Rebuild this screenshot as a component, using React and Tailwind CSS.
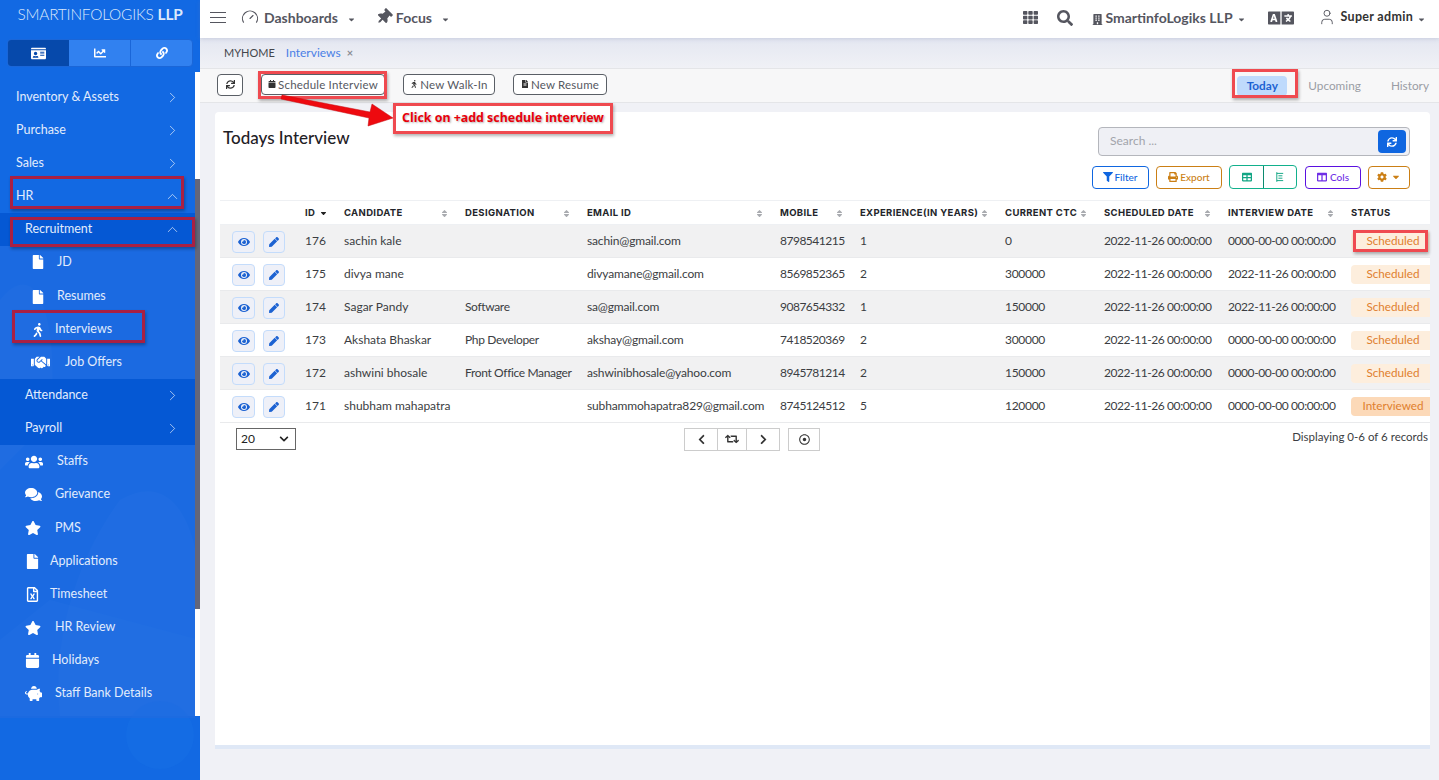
import { Gauge, ChevronRight, ChevronUp, User } from 'lucide-react';
import {
  FaIdCard, FaChartLine, FaLink, FaFile, FaWalking, FaHandshake, FaUsers, FaComments, FaStar,
  FaRegFileExcel, FaCalendar, FaPiggyBank, FaThumbtack, FaTh, FaSearch, FaBuilding, FaLanguage,
  FaSync, FaFilter, FaPrint, FaTable, FaColumns, FaCog, FaEye, FaPen, FaChevronLeft, FaChevronDown,
  FaChevronRight, FaRetweet, FaRegDotCircle, FaSort, FaSortDown, FaCaretDown, FaFileAlt,
} from 'react-icons/fa';

const navTop = [
  { label: 'Inventory & Assets', arrow: 'right' },
  { label: 'Purchase', arrow: 'right' },
  { label: 'Sales', arrow: 'right' },
  { label: 'HR', arrow: 'up' },
];

const recruitment = [
  { label: 'JD', icon: FaFile, text: 'ml-[12px]', h: 'h-[32px]' },
  { label: 'Resumes', icon: FaFile, text: 'ml-[12px]', h: 'h-[35px] pt-[2px]' },
  { label: 'Interviews', icon: FaWalking, text: 'ml-[10px]', h: 'h-[33px]' },
  { label: 'Job Offers', icon: FaHandshake, wide: true, text: 'ml-[15px]', h: 'h-[33px]' },
];

const navBottom = [
  { label: 'Staffs', icon: FaUsers, size: 'text-[18px]', text: 'w-[32px]', h: 'h-[33px]' },
  { label: 'Grievance', icon: FaComments, size: 'text-[17px]', text: 'w-[30px]', h: 'h-[33px]' },
  { label: 'PMS', icon: FaStar, size: 'text-[16px]', text: 'w-[30px]', h: 'h-[34px]' },
  { label: 'Applications', icon: FaFile, size: 'text-[15px]', text: 'w-[25px]', h: 'h-[33px]' },
  { label: 'Timesheet', icon: FaRegFileExcel, size: 'text-[15px]', text: 'w-[25px]', h: 'h-[33px]' },
  { label: 'HR Review', icon: FaStar, size: 'text-[16px]', text: 'w-[30px]', h: 'h-[33px]' },
  { label: 'Holidays', icon: FaCalendar, size: 'text-[15px]', text: 'w-[27px]', h: 'h-[33px]' },
  { label: 'Staff Bank Details', icon: FaPiggyBank, size: 'text-[17px]', text: 'w-[30px]', h: 'h-[33px]' },
];

const columns = [
  { label: 'ID', w: 'w-[39px]', sort: 'down', cell: '' },
  { label: 'CANDIDATE', w: 'w-[121px]', sort: 'both', cell: '' },
  { label: 'DESIGNATION', w: 'w-[122px]', sort: 'both', cell: 'tracking-[-0.35px]' },
  { label: 'EMAIL ID', w: 'w-[193px]', sort: 'both', cell: 'tracking-[-0.15px]' },
  { label: 'MOBILE', w: 'w-[80px]', sort: 'both', cell: 'tracking-[-0.5px]' },
  { label: 'EXPERIENCE(IN YEARS)', w: 'w-[145px]', sort: 'both', cell: '' },
  { label: 'CURRENT CTC', w: 'w-[99px]', sort: 'both', cell: 'tracking-[-0.3px]' },
  { label: 'SCHEDULED DATE', w: 'w-[124px]', sort: 'both', cell: 'tracking-[-0.42px]' },
  { label: 'INTERVIEW DATE', w: 'w-[123px]', sort: 'both', cell: 'tracking-[-0.42px]' },
  { label: 'STATUS', w: 'w-[87px]', cell: '' },
];

const rows = [
  ['176', 'sachin kale', '', 'sachin@gmail.com', '8798541215', '1', '0', '2022-11-26 00:00:00', '0000-00-00 00:00:00', 'Scheduled'],
  ['175', 'divya mane', '', 'divyamane@gmail.com', '8569852365', '2', '300000', '2022-11-26 00:00:00', '2022-11-26 00:00:00', 'Scheduled'],
  ['174', 'Sagar Pandy', 'Software', 'sa@gmail.com', '9087654332', '1', '150000', '2022-11-26 00:00:00', '2022-11-26 00:00:00', 'Scheduled'],
  ['173', 'Akshata Bhaskar', 'Php Developer', 'akshay@gmail.com', '7418520369', '2', '300000', '2022-11-26 00:00:00', '0000-00-00 00:00:00', 'Scheduled'],
  ['172', 'ashwini bhosale', 'Front Office Manager', 'ashwinibhosale@yahoo.com', '8945781214', '2', '150000', '2022-11-26 00:00:00', '0000-00-00 00:00:00', 'Scheduled'],
  ['171', 'shubham mahapatra', '', 'subhammohapatra829@gmail.com', '8745124512', '5', '120000', '2022-11-26 00:00:00', '0000-00-00 00:00:00', 'Interviewed'],
];

function Arrow({ dir }) {
  if (dir === 'up') return <ChevronUp className="w-[17px] h-[17px] text-white/70" strokeWidth={1.25} />;
  return <ChevronRight className="w-[17px] h-[17px] text-white/70" strokeWidth={1.25} />;
}

function Sidebar() {
  return (
    <aside className="relative w-[200px] h-[780px] flex-shrink-0 flex flex-col overflow-hidden bg-[#1269e3] text-[#e2ecfc] text-[12.5px]">
      <svg className="absolute inset-0 w-full h-full" viewBox="0 0 200 780" fill="none">
        <path d="M0 300 C40 250 60 330 50 420 L0 470Z" fill="#2a78e8" opacity="0.5" />
        <path d="M120 500 C170 470 200 520 200 600 L200 716 L60 716 C50 620 90 540 120 500Z" fill="#2f7dea" opacity="0.45" />
        <path d="M0 640 L50 600 L200 640 L200 716 L0 716Z" fill="#2f7dea" opacity="0.4" />
        <circle cx="160" cy="735" r="34" fill="#1570e6" opacity="0.5" />
      </svg>
      <div className="relative h-[29px] flex items-center justify-center text-[15.4px] tracking-[-0.2px] text-[#dbe8fb] font-light">
        <span>SMARTINFOLOGIKS <span className="font-bold">LLP</span></span>
      </div>
      <div className="relative mt-[10px] mx-[7px] h-[28px] flex rounded border border-[#1a66d8] bg-[#3181f0] overflow-hidden">
        <div className="w-[61px] bg-[#0649ab] flex items-center justify-center text-white text-[15px]"><FaIdCard /></div>
        <div className="w-[62px] border-r border-[#1a66d8] flex items-center justify-center text-white text-[12px]"><FaChartLine /></div>
        <div className="flex-1 flex items-center justify-center text-white text-[12px]"><FaLink /></div>
      </div>
      <div className="relative mt-[5px] h-[644px] flex">
        <div className="w-[195px] pt-[9px]">
          {navTop.map((item) => (
            <div key={item.label} className="h-[33px] pl-4 pr-[14px] flex items-center justify-between">
              <span>{item.label}</span>
              <Arrow dir={item.arrow} />
            </div>
          ))}
          <div className="h-[33px] pl-[25px] pr-[14px] flex items-center justify-between bg-[#0558d4]">
            <span>Recruitment</span>
            <Arrow dir="up" />
          </div>
          <div className="bg-[#1f6be0]/70">
            {recruitment.map((item) => {
              const Icon = item.icon;
              return (
                <div key={item.label} className={item.h + ' pl-[31px] flex items-center'}>
                  <Icon className={item.wide ? 'text-[19px] text-white' : 'text-[14px] text-white w-[14px]'} />
                  <span className={item.text}>{item.label}</span>
                </div>
              );
            })}
          </div>
          <div className="bg-[#0558d4]">
            {['Attendance', 'Payroll'].map((label) => (
              <div key={label} className="h-[33px] pl-[25px] pr-[14px] flex items-center justify-between">
                <span>{label}</span>
                <Arrow dir="right" />
              </div>
            ))}
          </div>
          <div className="bg-[#1f6be0]/70 h-[273px]">
            {navBottom.map((item) => {
              const Icon = item.icon;
              return (
                <div key={item.label} className={item.h + ' pl-[25px] flex items-center'}>
                  <div className={item.text + ' flex-shrink-0'}><Icon className={item.size + ' text-white'} /></div>
                  <span>{item.label}</span>
                </div>
              );
            })}
          </div>
        </div>
        <div className="w-[5px] bg-white flex flex-col">
          <div className="h-[107px]" />
          <div className="h-[430px] bg-[#63667a]" />
        </div>
      </div>
    </aside>
  );
}

function TopBar() {
  return (
    <header className="h-[38px] bg-white flex items-center text-[#55565f] shadow-[0_1px_4px_rgba(120,130,170,0.25)] relative">
      <div className="ml-[10px] w-[16px] flex flex-col gap-[4px] -mt-[3px]">
        <span className="h-[1px] bg-[#55565f]" />
        <span className="h-[1px] bg-[#55565f]" />
        <span className="h-[1px] bg-[#55565f]" />
      </div>
      <Gauge className="ml-[15px] w-[18px] h-[18px] -mt-1" strokeWidth={1.5} />
      <span className="ml-[5px] text-[14px] font-bold -mt-[4px]">Dashboards</span>
      <FaCaretDown className="ml-[9px] text-[9px]" />
      <FaThumbtack className="ml-[20px] text-[16px] -mt-1 rotate-45" />
      <span className="ml-[4px] text-[14px] font-bold -mt-[4px]">Focus</span>
      <FaCaretDown className="ml-[9px] text-[9px]" />
      <div className="ml-auto flex items-center">
        <FaTh className="text-[15px] -mt-1" />
        <FaSearch className="ml-[19px] text-[16px] -mt-[2px]" />
        <FaBuilding className="ml-[19px] text-[11px]" />
        <span className="ml-[2px] text-[14px] font-bold -mt-[4px]">SmartinfoLogiks LLP</span>
        <FaCaretDown className="ml-[4px] text-[9px]" />
        <FaLanguage className="ml-[22px] text-[26px] -mt-[2px]" />
        <User className="ml-[24px] w-[18px] h-[20px] -mt-[5px]" strokeWidth={1.25} />
        <span className="ml-[5px] text-[12.5px] font-bold text-[#333] tracking-[0.3px] -mt-[3px]">Super admin</span>
        <FaCaretDown className="ml-[4px] mr-[13px] text-[9px]" />
      </div>
    </header>
  );
}

function OutlineBtn({ icon: Icon, children, className = '' }) {
  return (
    <button className={'h-[21px] flex items-center justify-center rounded border border-[#5a5f66] bg-white text-[11.5px] text-[#55585f] tracking-[0.2px] leading-[17px] pb-[1px] ' + className}>
      <Icon className="text-[8px] mr-[2px] text-[#333]" />
      {children}
    </button>
  );
}

function Toolbar() {
  return (
    <div className="h-[35px] flex items-center bg-[#f7f7f8] border-y border-[#e4e5e8] pl-[17px] pb-[2px] relative">
      <button className="w-[26px] h-[22px] rounded border border-[#5a5f66] bg-white flex items-center justify-center">
        <FaSync className="text-[9px] text-[#333]" />
      </button>
      <OutlineBtn icon={FaCalendar} className="ml-[18px] w-[124px]">Schedule Interview</OutlineBtn>
      <OutlineBtn icon={FaWalking} className="ml-[18px] w-[92px]">New Walk-In</OutlineBtn>
      <OutlineBtn icon={FaFileAlt} className="ml-[18px] w-[94px]">New Resume</OutlineBtn>
      <div className="ml-auto flex items-center text-[11.8px] text-[#9a9da5] pt-[3px]">
        <span className="w-[50px] h-[20px] flex items-center justify-center rounded bg-[#bfdafc] text-[#1c62d2] font-bold">Today</span>
        <span className="ml-[21px]">Upcoming</span>
        <span className="ml-[30px] mr-[10px]">History</span>
      </div>
    </div>
  );
}

function ActionBtn({ className, children }) {
  return (
    <button className={'h-[23px] flex items-center justify-center rounded border text-[10px] bg-white font-medium ' + className}>
      {children}
    </button>
  );
}

function DataTable() {
  return (
    <table className="table-fixed w-[1210px] ml-[5px] border-collapse text-[12px] text-[#3b3d42]">
      <thead>
        <tr className="h-[24px] border-y border-[#eef0f3]">
          <th className="w-[77px]" />
          {columns.map((col) => (
            <th key={col.label} className={col.w + " px-2 pt-[2px] text-left text-[9.5px] font-bold text-[#23252a] tracking-[0.35px] whitespace-nowrap overflow-hidden [font-family:Inter,sans-serif]"}>
              <div className="flex items-center justify-between">
                <span>{col.label}</span>
                {col.sort === 'down' && <FaSortDown className="text-[9px] -mt-1 text-[#222]" />}
                {col.sort === 'both' && <FaSort className="text-[9px] text-[#a9abb0]" />}
              </div>
            </th>
          ))}
        </tr>
      </thead>
      <tbody>
        {rows.map((row, i) => (
          <tr key={row[0]} className={'h-[33px] border-b border-[#e9eaec] ' + (i % 2 === 0 ? 'bg-[#f1f1f2]' : 'bg-white')}>
            <td>
              <div className="flex items-center pl-[12px] pt-[1px]">
                <button className="w-[23px] h-[22px] rounded border border-[#c4dcfb] bg-[#eef0f8] flex items-center justify-center">
                  <FaEye className="text-[12px] text-[#1c62d2]" />
                </button>
                <button className="ml-[8px] w-[22px] h-[22px] rounded border border-[#c4dcfb] bg-[#eef0f8] flex items-center justify-center">
                  <FaPen className="text-[10px] text-[#1c62d2]" />
                </button>
              </div>
            </td>
            {row.slice(0, 9).map((cell, j) => (
              <td key={j} className={columns[j].cell + ' px-2 whitespace-nowrap'}>{cell}</td>
            ))}
            <td className="pl-2">
              <span className={'flex items-center justify-center h-[19px] pl-[5px] rounded-l text-[11.7px] text-[#e07f2e] ' + (row[9] === 'Interviewed' ? 'bg-[#fcd9b8]' : 'bg-[#fdeedd]')}>
                {row[9]}
              </span>
            </td>
          </tr>
        ))}
      </tbody>
    </table>
  );
}

function Card() {
  return (
    <section className="ml-[15px] mt-[9px] w-[1215px] h-[637px] bg-white rounded-t border-b-[4px] border-[#dfe8f6] relative">
      <div className="flex justify-between pt-[15px] pl-[8px] pr-[20px] h-[88px]">
        <h1 className="text-[17px] font-medium text-[#1f2126] leading-[22px]">Todays Interview</h1>
        <div className="flex flex-col items-end">
          <div className="w-[312px] h-[29px] rounded border border-[#b4b6bc] bg-[#eff0f5] flex items-center justify-between pl-[11px] pr-[3px] text-[12px] text-[#a2a4ab]">
            <span className="-mt-[1px]">Search ...</span>
            <span className="w-[28px] h-[23px] rounded bg-[#0f66e0] flex items-center justify-center"><FaSync className="text-[10px] text-white" /></span>
          </div>
          <div className="mt-[9px] flex items-center">
            <ActionBtn className="w-[57px] border-[#0f66e0] text-[#0f66e0]"><FaFilter className="mr-[1px]" />Filter</ActionBtn>
            <ActionBtn className="ml-[7px] w-[66px] border-[#cb7f15] text-[#cb7f15]"><FaPrint className="mr-[2px]" />Export</ActionBtn>
            <div className="ml-[7px] w-[68px] h-[24px] flex rounded border border-[#12b08c] bg-white">
              <span className="w-[34px] border-r border-[#0c8a6f] flex items-center justify-center text-[#12a584] text-[10px]"><FaTable /></span>
              <span className="flex-1 flex items-center justify-center">
                <svg viewBox="0 0 10 12" className="w-[8px] h-[10px]" fill="none" stroke="#12a584" strokeWidth="1.2">
                  <path d="M1 0V12M1 1.5H9M3 4.5H8M3 7.5H8M1 10.5H9" />
                </svg>
              </span>
            </div>
            <ActionBtn className="ml-[8px] w-[56px] border-[#5a10e0] text-[#6f2fe6]"><FaColumns className="mr-[3px]" />Cols</ActionBtn>
            <ActionBtn className="ml-[7px] w-[42px] border-[#cb7f15] text-[#cb7f15]"><FaCog className="mr-[4px]" /><FaCaretDown /></ActionBtn>
          </div>
        </div>
      </div>
      <DataTable />
      <div className="relative flex items-center h-[24px] mt-[4px] ml-[21px]">
        <div className="w-[60px] h-[22px] border border-[#666] bg-white flex items-center justify-between px-1 text-[12px] text-[#222]">
          <span>20</span>
          <FaChevronDown className="text-[10px] mr-[2px]" />
        </div>
        <div className="ml-[388px] flex h-[23px] border border-[#ccc] bg-white text-[#333] text-[11px]">
          <span className="w-[32px] flex items-center justify-center"><FaChevronLeft /></span>
          <span className="w-[30px] border-x border-[#ccc] flex items-center justify-center"><FaRetweet className="text-[14px]" /></span>
          <span className="w-[32px] flex items-center justify-center"><FaChevronRight /></span>
        </div>
        <span className="ml-[8px] w-[32px] h-[23px] border border-[#ccc] flex items-center justify-center text-[11px] text-[#333]"><FaRegDotCircle /></span>
        <span className="ml-auto mr-[2px] text-[11.5px] text-[#3b3d42] -mt-[4px]">Displaying 0-6 of 6 records</span>
      </div>
    </section>
  );
}

function Annotations() {
  return (
    <>
      <div className="absolute left-[10px] top-[176px] w-[174px] h-[33px] border-[3px] border-[#a92043] shadow-[1px_2px_3px_rgba(0,0,0,0.3)]" />
      <div className="absolute left-[10px] top-[217px] w-[185px] h-[30px] border-[3px] border-[#a92043] shadow-[1px_2px_3px_rgba(0,0,0,0.3)]" />
      <div className="absolute left-[12px] top-[310px] w-[133px] h-[33px] border-[3px] border-[#a92043] shadow-[1px_2px_3px_rgba(0,0,0,0.3)]" />
      <div className="absolute left-[258px] top-[71px] w-[129px] h-[28px] border-[3px] border-[#ef4a50] shadow-[1px_2px_3px_rgba(0,0,0,0.3)]" />
      <div className="absolute left-[1232px] top-[69px] w-[66px] h-[29px] border-[3px] border-[#ef4a50] shadow-[1px_2px_3px_rgba(0,0,0,0.3)]" />
      <div className="absolute left-[1353px] top-[230px] w-[75px] h-[22px] border-[3px] border-[#ef4a50] shadow-[1px_2px_3px_rgba(0,0,0,0.3)]" />
      <div className="absolute left-[393px] top-[103px] w-[220px] h-[31px] border-[3px] border-[#ef4a50] bg-white flex items-center justify-center text-[12.4px] font-bold text-[#e8000b] [font-family:Noto_Sans,sans-serif] shadow-[1px_2px_3px_rgba(0,0,0,0.3)] [text-shadow:1px_1px_2px_rgba(0,0,0,0.3)]">
        Click on +add schedule interview
      </div>
      <svg className="absolute left-[270px] top-[90px] w-[130px] h-[45px]" viewBox="0 0 130 45">
        <path d="M12 5 L100 22 L102 14 L123 28 L98 36 L99 28 L11 9Z" fill="#ee0a0f" stroke="#c40a10" strokeWidth="0.5" />
      </svg>
    </>
  );
}

export default function App() {
  return (
    <div className="relative w-[1439px] h-[780px] overflow-hidden flex bg-[#f0f1f6] [font-family:Lato,sans-serif]">
      <Sidebar />
      <main className="flex-1 min-w-0">
        <TopBar />
        <div className="h-[30px] bg-gradient-to-b from-[#e4e7f1] to-[#f0f1f6] flex items-center pl-[24px] text-[12px]">
          <span className="text-[#44464c] text-[11px]">MYHOME</span>
          <span className="ml-[11px] text-[#4a7fe6]">Interviews</span>
          <span className="ml-[6px] text-[#8a8d95] text-[11px] font-bold">×</span>
        </div>
        <Toolbar />
        <Card />
      </main>
      <Annotations />
    </div>
  );
}
